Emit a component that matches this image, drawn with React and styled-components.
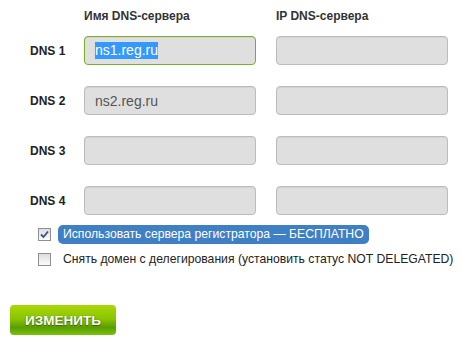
import styled, { createGlobalStyle } from "styled-components";

const GlobalStyle = createGlobalStyle`
  body {
    margin: 0;
    background: #fff;
    font-family: "Liberation Sans", Arial, sans-serif;
  }
`;

const Page = styled.div`
  width: 462px;
  height: 354px;
  padding: 9px 0 0 10px;
  box-sizing: border-box;
  overflow: hidden;
`;

const Grid = styled.div`
  display: grid;
  grid-template-columns: 34px 172px 172px;
  column-gap: 20px;
  margin-left: 20px;
  align-items: center;
`;

const HeadCell = styled.div`
  font-size: 12px;
  font-weight: bold;
  color: #333;
  height: 14px;
  line-height: 14px;
  margin-bottom: 13px;
  white-space: nowrap;
`;

const RowLabel = styled.div`
  font-size: 12px;
  font-weight: bold;
  color: #222;
  white-space: nowrap;
  margin-bottom: ${(p) => (p.$last ? 0 : 21)}px;
`;

const Field = styled.div`
  height: 29px;
  box-sizing: border-box;
  border: 1px solid ${(p) => (p.$focused ? "#78b028" : "#bcbcbc")};
  border-radius: 4px;
  background: #dfdfdf;
  box-shadow: inset 0 1px 1px rgba(0, 0, 0, 0.06);
  padding: 0 10px;
  display: flex;
  align-items: center;
  font-size: 14px;
  color: #555;
  margin-bottom: ${(p) => (p.$last ? 0 : 21)}px;
`;

const Selected = styled.span`
  background: #3399ff;
  color: #fff;
  line-height: 17px;
`;

const Options = styled.div`
  display: flex;
  flex-direction: column;
  gap: 6px;
  margin: 10px 0 0 28px;
`;

const OptionRow = styled.label`
  display: flex;
  align-items: center;
  gap: 7px;
`;

const Box = styled.span`
  width: 13px;
  height: 13px;
  flex-shrink: 0;
  box-sizing: border-box;
  border: 1px solid #8f8f8f;
  background: linear-gradient(#dedede, #fbfbfb);
  display: flex;
  align-items: center;
  justify-content: center;
`;

const OptionText = styled.span`
  font-size: 12.2px;
  line-height: 19px;
  padding: 0 5px;
  border-radius: 5px;
  white-space: nowrap;
  color: ${(p) => (p.$active ? "#fff" : "#222")};
  background: ${(p) => (p.$active ? "#3f80c4" : "transparent")};
`;

const Button = styled.button`
  display: block;
  margin-top: 36px;
  width: 106px;
  height: 30px;
  border: none;
  border-radius: 4px;
  background: linear-gradient(#a9d806 0%, #8cc503 45%, #5a9e02 75%, #7ac10a 100%);
  color: #fff;
  font-family: "Liberation Sans", Arial, sans-serif;
  font-weight: bold;
  font-size: 13.5px;
  text-shadow: 0 1px 1px #3a6500, 0 0 1px #3a6500;
  padding: 0;
  cursor: pointer;
`;

function CheckBox({ checked }) {
  return (
    <Box>
      {checked && (
        <svg width="9" height="9" viewBox="0 0 9 9">
          <path d="M1 4.5 L3.5 7 L8 1.5" fill="none" stroke="#3b4f8c" strokeWidth="1.8" />
        </svg>
      )}
    </Box>
  );
}

const rows = [
  { label: "DNS 1", name: "ns1.reg.ru", selected: true },
  { label: "DNS 2", name: "ns2.reg.ru" },
  { label: "DNS 3", name: "" },
  { label: "DNS 4", name: "" },
];

export default function App() {
  return (
    <Page>
      <GlobalStyle />
      <Grid>
        <div />
        <HeadCell>Имя DNS-сервера</HeadCell>
        <HeadCell>IP DNS-сервера</HeadCell>
        {rows.map((r, i) => {
          const last = i === rows.length - 1;
          return [
            <RowLabel key={r.label + "l"} $last={last}>{r.label}</RowLabel>,
            <Field key={r.label + "n"} $focused={r.selected} $last={last}>
              {r.selected ? <Selected>{r.name}</Selected> : r.name}
            </Field>,
            <Field key={r.label + "i"} $last={last} />,
          ];
        })}
      </Grid>
      <Options>
        <OptionRow>
          <CheckBox checked />
          <OptionText $active>Использовать сервера регистратора — БЕСПЛАТНО</OptionText>
        </OptionRow>
        <OptionRow>
          <CheckBox />
          <OptionText>Снять домен с делегирования (установить статус NOT DELEGATED)</OptionText>
        </OptionRow>
      </Options>
      <Button>ИЗМЕНИТЬ</Button>
    </Page>
  );
}
